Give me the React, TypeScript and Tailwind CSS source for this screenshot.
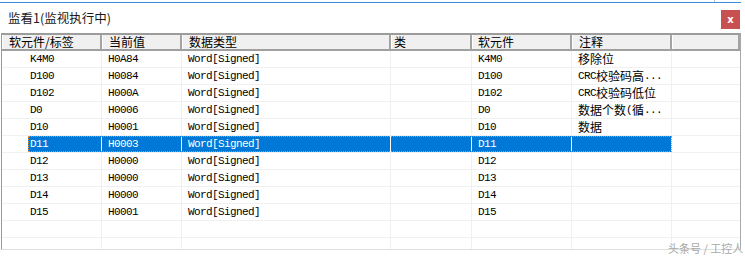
import React from "react";

const rows = [
  ["K4M0", "H0A84", "Word[Signed]", "", "K4M0", "移除位"],
  ["D100", "H0084", "Word[Signed]", "", "D100", "CRC校验码高..."],
  ["D102", "H000A", "Word[Signed]", "", "D102", "CRC校验码低位"],
  ["D0", "H0006", "Word[Signed]", "", "D0", "数据个数(循..."],
  ["D10", "H0001", "Word[Signed]", "", "D10", "数据"],
  ["D11", "H0003", "Word[Signed]", "", "D11", ""],
  ["D12", "H0000", "Word[Signed]", "", "D12", ""],
  ["D13", "H0000", "Word[Signed]", "", "D13", ""],
  ["D14", "H0000", "Word[Signed]", "", "D14", ""],
  ["D15", "H0001", "Word[Signed]", "", "D15", ""],
];

const widths = ["w-[100px]", "w-[80px]", "w-[209px]", "w-[81px]", "w-[100px]", "w-[100px]", "w-[68px]"];
const headers = ["软元件/标签", "当前值", "数据类型", "类", "软元件", "注释", ""];
const headerPad = ["pl-[6px]", "pl-[6px]", "pl-[6px]", "pl-[2px]", "pl-[5px]", "pl-[6px]", "pl-[6px]"];
const cellPad = ["pl-[2px]", "pl-[6px]", "pl-[6px]", "pl-[6px]", "pl-[6px]", "pl-[6px]", "pl-[6px]"];

const cjk = /[\u3000-\u9fff\uff00-\uffef]/;

function Mixed({ text }: { text: string }) {
  const parts: { s: string; c: boolean }[] = [];
  for (const ch of text) {
    const c = cjk.test(ch);
    const last = parts[parts.length - 1];
    if (last && last.c === c) last.s += ch;
    else parts.push({ s: ch, c });
  }
  return (
    <>
      {parts.map((p, i) =>
        p.c ? (
          <span key={i} className="text-[12px] tracking-normal font-['Noto_Sans_CJK_SC',sans-serif]">
            {p.s}
          </span>
        ) : (
          <span key={i} className="text-[11px] tracking-[-0.6px] font-['Liberation_Mono',monospace]">
            {p.s}
          </span>
        )
      )}
    </>
  );
}

export default function App() {
  return (
    <div className="relative w-[745px] h-[257px] bg-white overflow-hidden font-['Noto_Sans_CJK_SC','Noto_Sans',sans-serif] text-black">
      <div className="h-[2px] w-[741px] flex">
        <div className="ml-[714px] w-[1px] h-[2px] bg-[#c8c8c8]" />
      </div>
      <div className="h-[1px] w-[741px] bg-[#3c8fd8]" />
      <div className="flex h-[30px] w-[741px] pr-[1px]">
        <div className="pl-[8px] pt-[5px] text-[12.5px] leading-[20px] text-[#1a1a1a]">监看1(监视执行中)</div>
        <div className="ml-auto mt-[7px] w-[19px] h-[19px] bg-[#c75050] flex items-center justify-center text-white text-[10px] font-bold leading-none font-['DejaVu_Sans',sans-serif]">
          x
        </div>
      </div>
      <div className="ml-[1px] w-[740px] border-l border-r border-b border-l-[#9a9a9a] border-r-[#a8a8a8] border-b-[#e0e0e0]">
        <div className="flex h-[18px] border-t-2 border-b-2 border-t-[#9c9c9c] border-b-[#a0a0a0] bg-[#f0f0f0]">
          {headers.map((h, i) => (
            <div
              key={i}
              className={`${widths[i]} ${headerPad[i]} h-full flex items-center border-r-2 border-[#a4a4a4] border-l border-l-white text-[12px] leading-[14px] whitespace-nowrap`}
            >
              {h}
            </div>
          ))}
        </div>
        {rows.map((r, ri) => {
          const sel = ri === 5;
          return (
            <div key={ri} className="relative flex h-[17px] border-b border-[#f0f0f0]">
              {r.concat([""]).map((c, ci) => {
                const isSel = sel && ci < 6;
                return (
                  <div
                    key={ci}
                    className={`${widths[ci]} h-full flex ${ci === 6 ? "" : isSel ? "border-r border-white" : "border-r border-[#f0f0f0]"}`}
                  >
                    <div
                      className={`flex-1 h-full flex items-center whitespace-nowrap overflow-hidden ${cellPad[ci]} ${ci === 0 ? "ml-[26px]" : ""} ${isSel ? "bg-[#0078d7] text-white" : ""}`}
                    >
                      <Mixed text={c} />
                    </div>
                  </div>
                );
              })}
              {sel && (
                <div className="absolute left-[26px] top-0 w-[644px] h-[16px] border border-dotted border-[#f08a24]" />
              )}
            </div>
          );
        })}
        <div className="flex h-[17px] border-b border-[#f0f0f0]">
          {widths.map((w, i) => (
            <div key={i} className={`${w} h-full ${i === 6 ? "" : "border-r border-[#f0f0f0]"}`} />
          ))}
        </div>
        <div className="flex h-[11px]">
          {widths.map((w, i) => (
            <div key={i} className={`${w} h-full ${i === 6 ? "" : "border-r border-[#f0f0f0]"}`} />
          ))}
        </div>
      </div>
      <div className="absolute left-[668px] top-[241px] text-[11px] leading-[14px] text-[#a8a8a8] font-['Noto_Sans_CJK_SC',sans-serif] whitespace-nowrap">
        头条号 / 工控人
      </div>
    </div>
  );
}
